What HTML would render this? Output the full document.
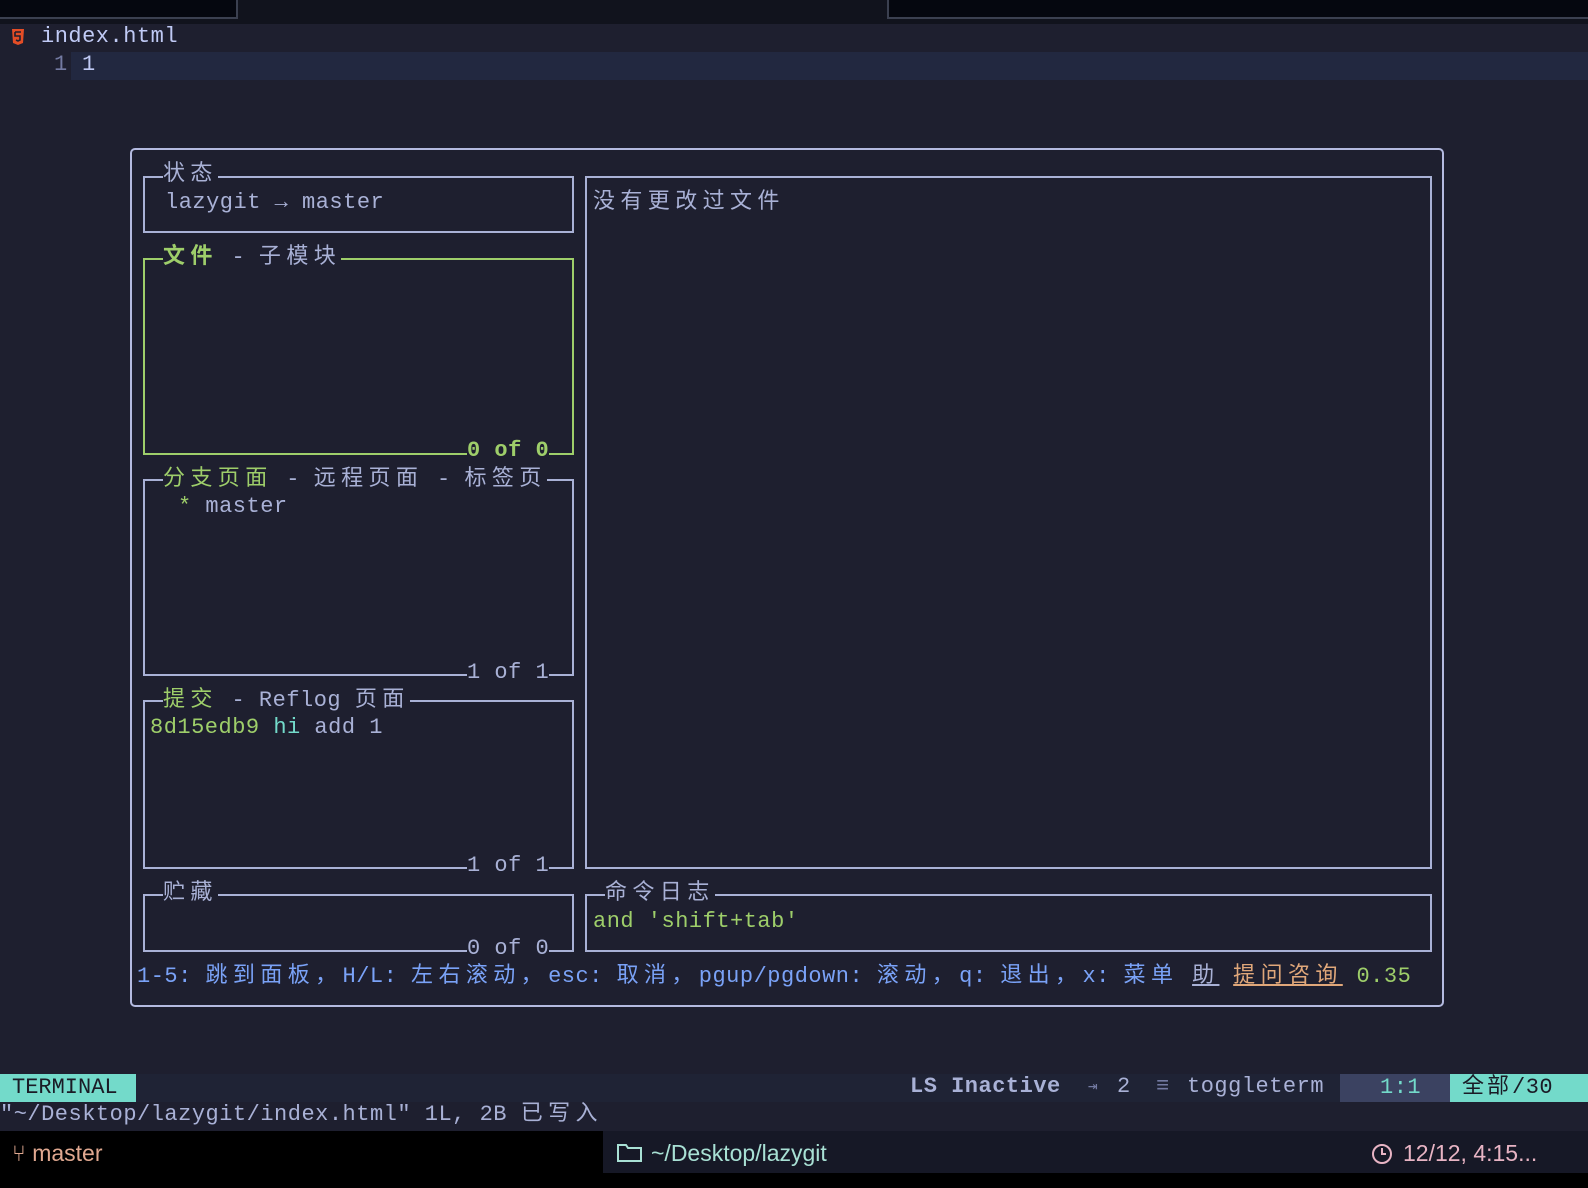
<!DOCTYPE html>
<html><head><meta charset="utf-8"><style>
*{margin:0;padding:0;box-sizing:border-box}
html,body{width:1588px;height:1188px;overflow:hidden;background:#1e1f2f}
body{position:relative;font-family:"Liberation Mono","Noto Sans CJK SC",monospace;font-size:22px;color:#a9b1d6}
.t{position:absolute;line-height:28px;white-space:pre;letter-spacing:0.5px}
.c{letter-spacing:5.4px}
.b{position:absolute;border:2px solid #a9b1d6}
.g{color:#9ece6a}
.tt{background:#1e1f2f}
</style></head><body>
<div style="position:absolute;left:0;top:0;width:1588px;height:24px;background:#11131d"></div>
<div style="position:absolute;left:0;top:0;width:238px;height:19px;background:#05070f;border-right:2px solid #3b4050;border-bottom:2px solid #3b4050"></div>
<div style="position:absolute;left:887px;top:0;width:701px;height:19px;background:#05070f;border-left:2px solid #3b4050;border-bottom:2px solid #3b4050"></div>
<svg style="position:absolute;left:11px;top:28px" width="14" height="18" viewBox="0 0 14 18"><path d="M1 1h12l-1 14-5 2-5-2z" fill="#e44d26"/><path d="M4 4h6M4 4v4h5v4l-2 1-2-1" stroke="#1e1f2f" stroke-width="1.6" fill="none"/></svg>
<div class="t" style="left:41px;top:23px;color:#c0caf5">index.html</div>
<div style="position:absolute;left:71px;top:52px;width:1517px;height:28px;background:#222840"></div>
<div class="t" style="left:54px;top:51px;color:#737aa2">1</div>
<div class="t" style="left:82px;top:51px;color:#c0caf5">1</div>

<div class="b" style="left:130px;top:148px;width:1314px;height:859px;border-radius:5px;border-color:#b4bae0"></div>
<div class="b" style="left:143px;top:176px;width:431px;height:57px"></div>
<div class="b" style="left:143px;top:258px;width:431px;height:197px;border-color:#9ece6a"></div>
<div class="b" style="left:143px;top:479px;width:431px;height:197px"></div>
<div class="b" style="left:143px;top:700px;width:431px;height:169px"></div>
<div class="b" style="left:143px;top:894px;width:431px;height:58px"></div>
<div class="b" style="left:585px;top:176px;width:847px;height:693px"></div>
<div class="b" style="left:585px;top:894px;width:847px;height:58px"></div>

<div class="t tt" style="left:163px;top:161px"><span class="c">状态</span></div>
<div class="t" style="left:165px;top:189px">lazygit → master</div>
<div class="t tt" style="left:163px;top:244px"><span class="c g" style="font-weight:bold">文件</span> - <span class="c">子模块</span></div>
<div class="t tt g" style="left:467px;top:437px;font-weight:bold">0 of 0</div>
<div class="t tt" style="left:163px;top:466px"><span class="c g">分支页面</span> - <span class="c">远程页面</span> - <span class="c">标签页</span></div>
<div class="t" style="left:178px;top:493px"><span class="g">*</span> master</div>
<div class="t tt" style="left:467px;top:659px">1 of 1</div>
<div class="t tt" style="left:163px;top:687px"><span class="c g">提交</span> - Reflog <span class="c">页面</span></div>
<div class="t" style="left:150px;top:714px"><span class="g">8d15edb9</span> <span style="color:#73daca">hi</span> add 1</div>
<div class="t tt" style="left:467px;top:852px">1 of 1</div>
<div class="t tt" style="left:163px;top:880px"><span class="c">贮藏</span></div>
<div class="t tt" style="left:467px;top:935px">0 of 0</div>
<div class="t" style="left:593px;top:189px"><span class="c">没有更改过文件</span></div>
<div class="t tt" style="left:605px;top:880px"><span class="c">命令日志</span></div>
<div class="t g" style="left:593px;top:908px">and 'shift+tab'</div>
<div class="t" style="left:137px;top:963px;color:#7aa2f7">1-5: <span class="c">跳到面板，</span>H/L: <span class="c">左右滚动，</span>esc: <span class="c">取消，</span>pgup/pgdown: <span class="c">滚动，</span>q: <span class="c">退出，</span>x: <span class="c">菜单</span> <span class="c" style="color:#a9b1d6;text-decoration:underline">助</span> <span class="c" style="color:#e0a77a;text-decoration:underline">提问咨询</span> <span class="g">0.35</span></div>

<div style="position:absolute;left:0;top:1074px;width:1588px;height:28px;background:#1f2335"></div>
<div class="t" style="left:0;top:1074px;width:136px;background:#73daca;color:#1a1b26;padding-left:12px;letter-spacing:0">TERMINAL</div>
<div class="t" style="left:910px;top:1073px;font-weight:bold">LS Inactive</div>
<div class="t" style="left:1088px;top:1073px;font-size:16px;color:#737aa2">⇥</div>
<div class="t" style="left:1117px;top:1073px">2</div>
<div class="t" style="left:1156px;top:1073px;color:#737aa2">≡</div>
<div class="t" style="left:1187px;top:1073px">toggleterm</div>
<div class="t" style="left:1340px;top:1074px;width:110px;background:#3b4261;color:#73daca;padding-left:40px">1:1</div>
<div class="t" style="left:1450px;top:1074px;width:138px;background:#73daca;color:#1a1b26;padding-left:12px"><span style="letter-spacing:3px">全部</span>/30</div>
<div class="t" style="left:0;top:1101px">"~/Desktop/lazygit/index.html" 1L, 2B <span class="c">已写入</span></div>

<div style="position:absolute;left:0;top:1131px;width:603px;height:57px;background:#000"></div>
<div style="position:absolute;left:603px;top:1131px;width:985px;height:57px;background:#161826"></div>
<div style="position:absolute;left:0;top:1173px;width:1588px;height:15px;background:#000"></div>
<div class="t" style="left:12px;top:1139px;font-family:'Liberation Sans',sans-serif;font-size:23px;color:#e0a890;letter-spacing:0">⑂ master</div>
<svg style="position:absolute;left:617px;top:1143px" width="26" height="20"><path d="M1 2h8l2 3h13v13H1z" fill="none" stroke="#a8e0d4" stroke-width="2"/></svg>
<div class="t" style="left:651px;top:1139px;font-family:'Liberation Sans',sans-serif;font-size:23px;color:#a8e0d4;letter-spacing:0">~/Desktop/lazygit</div>
<svg style="position:absolute;left:1371px;top:1143px" width="22" height="22"><circle cx="11" cy="11" r="9" fill="none" stroke="#e8b4c4" stroke-width="2"/><path d="M11 5v6h4" fill="none" stroke="#e8b4c4" stroke-width="2"/></svg>
<div class="t" style="left:1403px;top:1139px;font-family:'Liberation Sans',sans-serif;font-size:23px;color:#e8b4c4;letter-spacing:0">12/12, 4:15...</div>
</body></html>
